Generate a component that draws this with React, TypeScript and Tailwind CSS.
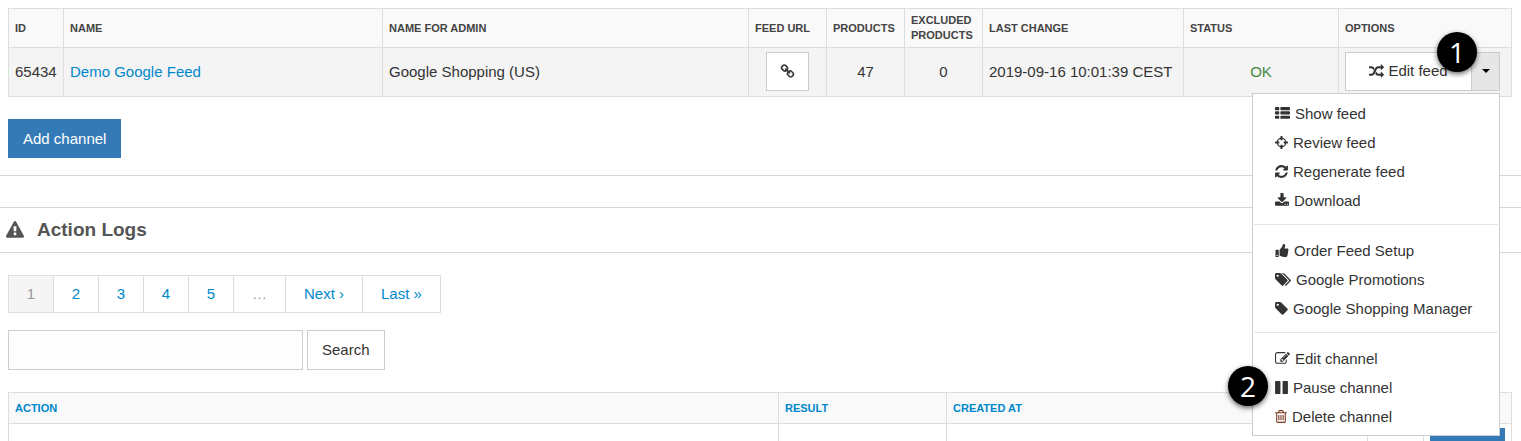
import clsx from 'clsx';
import type { ReactNode } from 'react';
import { FaThumbsUp } from 'react-icons/fa';

interface GlyphProps {
  readonly className?: string;
  readonly d: string;
  readonly viewBox: string;
}

function Glyph({ className, d, viewBox }: GlyphProps): ReactNode {
  return (
    <svg aria-hidden="true" className={clsx('shrink-0 fill-current', className)} viewBox={viewBox}>
      <path d={d} />
    </svg>
  );
}

const paths = {
  list: 'M512 1248v192q0 40-28 68t-68 28h-320q-40 0-68-28t-28-68v-192q0-40 28-68t68-28h320q40 0 68 28t28 68zm0-512v192q0 40-28 68t-68 28h-320q-40 0-68-28t-28-68v-192q0-40 28-68t68-28h320q40 0 68 28t28 68zm1280 512v192q0 40-28 68t-68 28h-960q-40 0-68-28t-28-68v-192q0-40 28-68t68-28h960q40 0 68 28t28 68zm-1280-1024v192q0 40-28 68t-68 28h-320q-40 0-68-28t-28-68v-192q0-40 28-68t68-28h320q40 0 68 28t28 68zm1280 512v192q0 40-28 68t-68 28h-960q-40 0-68-28t-28-68v-192q0-40 28-68t68-28h960q40 0 68 28t28 68zm0-512v192q0 40-28 68t-68 28h-960q-40 0-68-28t-28-68v-192q0-40 28-68t68-28h960q40 0 68 28t28 68z',
  crosshairs: 'M1325 1024h-109q-26 0-45-19t-19-45v-128q0-26 19-45t45-19h109q-32-108-112.5-188.5t-188.5-112.5v109q0 26-19 45t-45 19h-128q-26 0-45-19t-19-45v-109q-108 32-188.5 112.5t-112.5 188.5h109q26 0 45 19t19 45v128q0 26-19 45t-45 19h-109q32 108 112.5 188.5t188.5 112.5v-109q0-26 19-45t45-19h128q26 0 45 19t19 45v109q108-32 188.5-112.5t112.5-188.5zm339-192v128q0 26-19 45t-45 19h-143q-37 161-154.5 278.5t-278.5 154.5v143q0 26-19 45t-45 19h-128q-26 0-45-19t-19-45v-143q-161-37-278.5-154.5t-154.5-278.5h-143q-26 0-45-19t-19-45v-128q0-26 19-45t45-19h143q37-161 154.5-278.5t278.5-154.5v-143q0-26 19-45t45-19h128q26 0 45 19t19 45v143q161 37 278.5 154.5t154.5 278.5h143q26 0 45 19t19 45z',
  refresh: 'M1639 1056q0 5-1 7-64 268-268 434.5t-478 166.5q-146 0-282.5-55t-243.5-157l-129 129q-19 19-45 19t-45-19-19-45v-448q0-26 19-45t45-19h448q26 0 45 19t19 45-19 45l-137 137q71 66 161 102t187 36q134 0 250-65t186-179q11-17 53-117 8-23 30-23h192q13 0 22.5 9.5t9.5 22.5zm25-800v448q0 26-19 45t-45 19h-448q-26 0-45-19t-19-45 19-45l138-138q-148-137-349-137-134 0-250 65t-186 179q-11 17-53 117-8 23-30 23h-199q-13 0-22.5-9.5t-9.5-22.5v-7q65-268 270-434.5t480-166.5q146 0 284 55.5t245 156.5l130-129q19-19 45-19t45 19 19 45z',
  download: 'M1344 1344q0-26-19-45t-45-19-45 19-19 45 19 45 45 19 45-19 19-45zm256 0q0-26-19-45t-45-19-45 19-19 45 19 45 45 19 45-19 19-45zm128-224v320q0 40-28 68t-68 28h-1472q-40 0-68-28t-28-68v-320q0-40 28-68t68-28h465l135 136q58 56 136 56t136-56l136-136h464q40 0 68 28t28 68zm-325-569q17 41-14 70l-448 448q-18 19-45 19t-45-19l-448-448q-31-29-14-70 17-39 59-39h256v-448q0-26 19-45t45-19h256q26 0 45 19t19 45v448h256q42 0 59 39z',
  tag: 'M576 448q0-53-37.5-90.5t-90.5-37.5-90.5 37.5-37.5 90.5 37.5 90.5 90.5 37.5 90.5-37.5 37.5-90.5zm1067 576q0 53-37 90l-491 492q-39 37-91 37-53 0-90-37l-715-716q-38-37-64.5-101t-26.5-117v-416q0-52 38-90t90-38h416q53 0 117 26.5t102 64.5l715 714q37 39 37 91z',
  tags: 'M448 448q0-53-37.5-90.5t-90.5-37.5-90.5 37.5-37.5 90.5 37.5 90.5 90.5 37.5 90.5-37.5 37.5-90.5zm1067 576q0 53-37 90l-491 492q-39 37-91 37-53 0-90-37l-715-716q-38-37-64.5-101t-26.5-117v-416q0-52 38-90t90-38h416q53 0 117 26.5t102 64.5l715 714q37 39 37 91zm384 0q0 53-37 90l-491 492q-39 37-91 37-36 0-59-14t-53-45l470-470q37-37 37-90 0-52-37-91l-715-714q-38-38-102-64.5t-117-26.5h224q53 0 117 26.5t102 64.5l715 714q37 39 37 91z',
  edit: 'M888 1184l116-116-152-152-116 116v56h96v96h56zm440-720q-16-16-33 1l-350 350q-17 17-1 33t33-1l350-350q17-17 1-33zm80 594v190q0 119-84.5 203.5t-203.5 84.5h-832q-119 0-203.5-84.5t-84.5-203.5v-832q0-119 84.5-203.5t203.5-84.5h832q63 0 117 25 15 7 18 23 3 17-9 29l-49 49q-14 14-32 8-23-6-45-6h-832q-66 0-113 47t-47 113v832q0 66 47 113t113 47h832q66 0 113-47t47-113v-126q0-13 9-22l64-64q15-15 35-7t20 29zm-96-738l288 288-672 672h-288v-288zm444 132l-92 92-288-288 92-92q28-28 68-28t68 28l152 152q28 28 28 68t-28 68z',
  pause: 'M1664 192v1408q0 26-19 45t-45 19h-512q-26 0-45-19t-19-45v-1408q0-26 19-45t45-19h512q26 0 45 19t19 45zm-896 0v1408q0 26-19 45t-45 19h-512q-26 0-45-19t-19-45v-1408q0-26 19-45t45-19h512q26 0 45 19t19 45z',
  trash: 'M704 736v576q0 14-9 23t-23 9h-64q-14 0-23-9t-9-23v-576q0-14 9-23t23-9h64q14 0 23 9t9 23zm256 0v576q0 14-9 23t-23 9h-64q-14 0-23-9t-9-23v-576q0-14 9-23t23-9h64q14 0 23 9t9 23zm256 0v576q0 14-9 23t-23 9h-64q-14 0-23-9t-9-23v-576q0-14 9-23t23-9h64q14 0 23 9t9 23zm128 724v-948h-896v948q0 22 7 40.5t14.5 27 10.5 8.5h832q3 0 10.5-8.5t14.5-27 7-40.5zm-672-1076h448l-48-117q-7-9-17-11h-317q-10 2-17 11zm928 32v64q0 14-9 23t-23 9h-96v948q0 83-47 143.5t-113 60.5h-832q-66 0-113-58.5t-47-141.5v-952h-96q-14 0-23-9t-9-23v-64q0-14 9-23t23-9h309l70-167q15-37 54-63t79-26h320q40 0 79 26t54 63l70 167h309q14 0 23 9t9 23z',
  random: 'M666 481q-60 92-137 273-22-45-37-72.5t-40.5-63.5-51-56.5-63-35-81.5-14.5h-224q-14 0-23-9t-9-23v-192q0-14 9-23t23-9h224q250 0 410 225zm1126 799q0 14-9 23l-320 320q-9 9-23 9-13 0-22.5-9.5t-9.5-22.5v-192q-32 0-85 .5t-81 1-73-1-71-5-64-10.5-63-18.5-58-28.5-59-40-55-53.5-56-69.5q59-93 136-273 22 45 37 72.5t40.5 63.5 51 56.5 63 35 81.5 14.5h256v-192q0-14 9-23t23-9q12 0 24 10l319 319q9 9 9 23zm0-896q0 14-9 23l-320 320q-9 9-23 9-13 0-22.5-9.5t-9.5-22.5v-192h-256q-48 0-87 15t-69 45-51 61.5-45 77.5q-32 62-78 171-29 66-49.5 111t-54 105-64 100-74 83-90 68.5-106.5 42-128 16.5h-224q-14 0-23-9t-9-23v-192q0-14 9-23t23-9h224q48 0 87-15t69-45 51-61.5 45-77.5q32-62 78-171 29-66 49.5-111t54-105 64-100 74-83 90-68.5 106.5-42 128-16.5h256v-192q0-14 9-23t23-9q12 0 24 10l319 319q9 9 9 23z',
  link: 'M1520 1216q0-40-28-68l-208-208q-28-28-68-28-42 0-72 32 3 3 19 18.5t21.5 21.5 15 19 13 25.5 3.5 27.5q0 40-28 68t-68 28q-15 0-27.5-3.5t-25.5-13-19-15-21.5-21.5-18.5-19q-33 31-33 73 0 40 28 68l206 207q27 27 68 27 40 0 68-26l147-146q28-28 28-67zm-703-705q0-40-28-68l-206-207q-28-28-68-28-39 0-68 27l-147 146q-28 28-28 67 0 40 28 68l208 208q27 27 68 27 42 0 72-31-3-3-19-18.5t-21.5-21.5-15-19-13-25.5-3.5-27.5q0-40 28-68t68-28q15 0 27.5 3.5t25.5 13 19 15 21.5 21.5 18.5 19q33-31 33-73zm895 705q0 120-85 203l-147 146q-83 83-203 83-121 0-204-85l-206-207q-83-83-83-203 0-123 88-209l-88-88q-86 88-208 88-120 0-204-84l-208-208q-84-84-84-204t85-203l147-146q83-83 203-83 121 0 204 85l206 207q83 83 83 203 0 123-88 209l88 88q86-88 208-88 120 0 204 84l208 208q84 84 84 204z',
  warning: 'M1024 1375v-190q0-14-9.5-23.5t-22.5-9.5h-192q-13 0-22.5 9.5t-9.5 23.5v190q0 14 9.5 23.5t22.5 9.5h192q13 0 22.5-9.5t9.5-23.5zm-2-374l18-459q0-12-10-19-13-11-24-11h-220q-11 0-24 11-10 7-10 21l17 457q0 10 10 16.5t24 6.5h185q14 0 23.5-6.5t10.5-16.5zm-14-934l768 1408q35 63-2 126-17 29-46.5 46t-63.5 17h-1536q-34 0-63.5-17t-46.5-46q-37-63-2-126l768-1408q17-31 47-49t65-18 65 18 47 49z',
};

interface MenuEntry {
  readonly icon: ReactNode;
  readonly label: string;
  readonly marker?: string;
}

const menuGroups: readonly (readonly MenuEntry[])[] = [
  [
    { icon: <Glyph className="h-[15px] w-[15px]" d={paths.list} viewBox="0 0 1792 1792" />, label: 'Show feed' },
    { icon: <Glyph className="h-[15px] w-[13px]" d={paths.crosshairs} viewBox="128 0 1536 1792" />, label: 'Review feed' },
    { icon: <Glyph className="h-[15px] w-[13px]" d={paths.refresh} viewBox="128 0 1536 1792" />, label: 'Regenerate feed' },
    { icon: <Glyph className="h-[15px] w-[14px]" d={paths.download} viewBox="64 0 1664 1792" />, label: 'Download' },
  ],
  [
    { icon: <FaThumbsUp aria-hidden="true" className="h-[13px] w-[14px] shrink-0" />, label: 'Order Feed Setup' },
    { icon: <Glyph className="h-[15px] w-4" d={paths.tags} viewBox="0 0 1920 1792" />, label: 'Google Promotions' },
    { icon: <Glyph className="h-[15px] w-[13px]" d={paths.tag} viewBox="128 0 1536 1792" />, label: 'Google Shopping Manager' },
  ],
  [
    { icon: <Glyph className="h-[15px] w-[15px]" d={paths.edit} viewBox="0 0 1792 1792" />, label: 'Edit channel' },
    { icon: <Glyph className="h-[15px] w-[13px]" d={paths.pause} viewBox="128 0 1536 1792" />, label: 'Pause channel', marker: '2' },
    { icon: <Glyph className="h-[15px] w-3 text-[#7a3b1e]" d={paths.trash} viewBox="192 0 1408 1792" />, label: 'Delete channel' },
  ],
];

function StepMarker({ className, children }: { readonly className: string; readonly children: ReactNode }): ReactNode {
  return (
    <span
      className={clsx(
        "absolute z-20 flex size-10 items-center justify-center rounded-full bg-black font-['Open_Sans',sans-serif] text-[28px] leading-none font-medium text-white shadow-[0_2px_5px_rgba(0,0,0,0.6)]",
        className
      )}
    >
      {children}
    </span>
  );
}

function OptionsMenu(): ReactNode {
  return (
    <div className="absolute top-full right-0 z-10 mt-0.5 w-[248px] divide-y divide-[#e5e5e5] border border-[#ccc] bg-white px-px pt-1.5 pb-1">
      {menuGroups.map((group) => (
        <ul className="flex flex-col gap-px pt-3 pb-[9px] first:pt-0 last:pb-0" key={group[0].label}>
          {group.map((entry) => (
            <li className="relative" key={entry.label}>
              <a className="flex h-7 items-center gap-[5px] pl-[21px] whitespace-nowrap text-[#333]" href="#">
                {entry.icon}
                {entry.label}
              </a>
              {entry.marker ? <StepMarker className="-top-2 left-[-26px]">{entry.marker}</StepMarker> : null}
            </li>
          ))}
        </ul>
      ))}
    </div>
  );
}

const headCell = 'border border-[#ddd] px-1.5 text-left text-[11px] leading-[15px] font-bold';
const bodyCell = 'border border-[#ddd] px-1.5 whitespace-nowrap';

function ChannelTable(): ReactNode {
  return (
    <table className="w-full table-fixed border-collapse">
      <colgroup>
        <col className="w-[55px]" />
        <col className="w-[319px]" />
        <col />
        <col className="w-[78px]" />
        <col className="w-[78px]" />
        <col className="w-[78px]" />
        <col className="w-[201px]" />
        <col className="w-[155px]" />
        <col className="w-[173px]" />
      </colgroup>
      <thead>
        <tr className="h-[39px] bg-[#f9f9f9] text-[#444]">
          <th className={headCell}>ID</th>
          <th className={headCell}>NAME</th>
          <th className={headCell}>NAME FOR ADMIN</th>
          <th className={headCell}>FEED URL</th>
          <th className={headCell}>PRODUCTS</th>
          <th className={headCell}>EXCLUDED PRODUCTS</th>
          <th className={headCell}>LAST CHANGE</th>
          <th className={headCell}>STATUS</th>
          <th className={headCell}>OPTIONS</th>
        </tr>
      </thead>
      <tbody>
        <tr className="h-[49px] bg-[#f4f4f4]">
          <td className={bodyCell}>65434</td>
          <td className={bodyCell}>
            <a className="text-[#0088cc]" href="#">Demo Google Feed</a>
          </td>
          <td className={bodyCell}>Google Shopping (US)</td>
          <td className={clsx(bodyCell, 'pb-0.5')}>
            <a aria-label="Feed URL" className="mx-auto flex h-[39px] w-[43px] items-center justify-center border border-[#ccc] bg-white" href="#">
              <Glyph className="size-[15px]" d={paths.link} viewBox="0 0 1792 1792" />
            </a>
          </td>
          <td className={clsx(bodyCell, 'text-center')}>47</td>
          <td className={clsx(bodyCell, 'text-center')}>0</td>
          <td className={bodyCell}>2019-09-16 10:01:39 CEST</td>
          <td className={clsx(bodyCell, 'text-center text-[#468847]')}>OK</td>
          <td className={clsx(bodyCell, 'pb-0.5')}>
            <div className="relative flex h-[39px] w-[155px]">
              <button className="flex flex-1 items-center justify-center gap-1 border border-[#ccc] bg-white" type="button">
                <Glyph className="size-[15px]" d={paths.random} viewBox="0 0 1792 1792" />
                Edit feed
              </button>
              <button aria-expanded="true" aria-label="More options" className="-ml-px flex w-[29px] items-center justify-center border border-[#ccc] bg-[#e6e6e6]" type="button">
                <svg aria-hidden="true" className="h-1 w-2 fill-black" viewBox="0 0 8 4">
                  <path d="M0 0h8L4 4z" />
                </svg>
              </button>
              <StepMarker className="-top-5 right-[23px]">1</StepMarker>
              <OptionsMenu />
            </div>
          </td>
        </tr>
      </tbody>
    </table>
  );
}

const pages = ['1', '2', '3', '4', '5', '…', 'Next ›', 'Last »'] as const;

function Pagination(): ReactNode {
  return (
    <nav aria-label="Pagination" className="flex">
      {pages.map((page) => (
        <a
          className={clsx(
            '-ml-px flex h-[38px] items-center justify-center border border-[#ddd] first:ml-0',
            /^\d$/.test(page) ? 'w-[46px]' : 'px-[18px]',
            page === '1' && 'bg-[#f5f5f5] text-[#999]',
            page === '…' && 'text-[#999]',
            page !== '1' && page !== '…' && 'text-[#0088cc]'
          )}
          href="#"
          key={page}
        >
          {page}
        </a>
      ))}
    </nav>
  );
}

function LogTable(): ReactNode {
  return (
    <table className="w-full table-fixed border-collapse">
      <colgroup>
        <col />
        <col className="w-[168px]" />
        <col className="w-[421px]" />
        <col className="w-[56px]" />
        <col className="w-[88px]" />
      </colgroup>
      <thead>
        <tr className="h-[31px] bg-[#f9f9f9] text-[#0088cc]">
          <th className={headCell}><a href="#">ACTION</a></th>
          <th className={headCell}><a href="#">RESULT</a></th>
          <th className={headCell}><a href="#">CREATED AT</a></th>
          <th className={headCell} colSpan={2} />
        </tr>
      </thead>
      <tbody>
        <tr className="h-[49px]">
          <td className={bodyCell} />
          <td className={bodyCell} />
          <td className={bodyCell} />
          <td className={bodyCell} />
          <td className={clsx(bodyCell, 'pb-0.5')}>
            <button aria-label="Detail" className="block h-[39px] w-full bg-[#337ab7]" type="button" />
          </td>
        </tr>
      </tbody>
    </table>
  );
}

export default function App(): ReactNode {
  return (
    <main className="h-screen overflow-hidden bg-white font-['Liberation_Sans',Arial,sans-serif] text-[15px] leading-5 text-[#333]">
      <section className="border-b border-[#d5d5d5] pt-2 pr-[9px] pb-[17px] pl-2">
        <ChannelTable />
        <button className="mt-[22px] h-[39px] bg-[#337ab7] px-[15px] text-white" type="button">
          Add channel
        </button>
      </section>
      <section className="mt-[31px]">
        <h2 className="flex h-[46px] items-center gap-[13px] border-y border-[#d5d5d5] px-1.5 text-[19px] font-bold text-[#555]">
          <Glyph className="size-[18px]" d={paths.warning} viewBox="0 0 1792 1792" />
          Action Logs
        </h2>
        <div className="pt-[22px] pr-[9px] pl-2">
          <Pagination />
          <form className="mt-[17px] mb-[22px] flex gap-1">
            <input aria-label="Search logs" className="h-10 w-[295px] border border-[#ccc] bg-[#fdfdfd] px-3" type="text" />
            <button className="h-10 border border-[#ccc] bg-white px-3.5" type="submit">
              Search
            </button>
          </form>
          <LogTable />
        </div>
      </section>
    </main>
  );
}
